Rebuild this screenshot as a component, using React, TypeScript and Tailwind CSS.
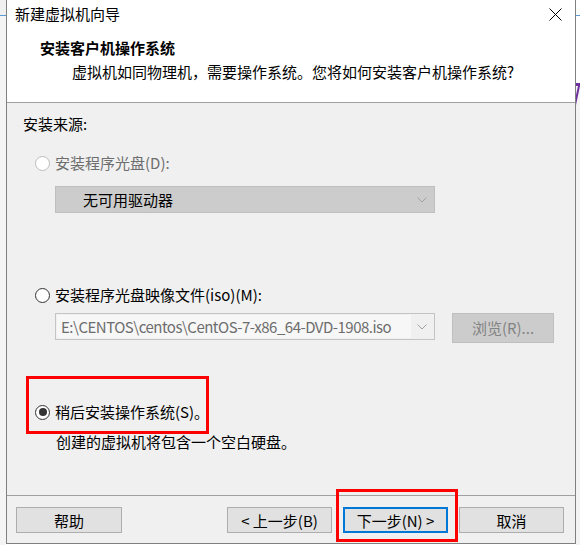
import React from "react";

const font = { fontFamily: '"Noto Sans CJK SC", "Noto Sans", sans-serif' };

function Radio({ checked = false, disabled = false }: { checked?: boolean; disabled?: boolean }) {
  return (
    <span
      className={`w-[15px] h-[15px] rounded-full border bg-white flex items-center justify-center shrink-0 ${
        disabled ? "border-[#bcbcbc]" : "border-[#333333]"
      }`}
    >
      {checked && <span className="w-[8px] h-[8px] rounded-full bg-[#333333]" />}
    </span>
  );
}

function Chevron() {
  return (
    <svg width="10" height="6" viewBox="0 0 10 6" className="shrink-0">
      <path d="M0.5 0.5 L5 5 L9.5 0.5" fill="none" stroke="#a0a0a0" strokeWidth="1" />
    </svg>
  );
}

function Btn({ label, w, primary = false }: { label: string; w: string; primary?: boolean }) {
  return (
    <button
      className={`${w} h-[26px] bg-[#e1e1e1] text-[15px] leading-none text-black flex items-center justify-center ${
        primary ? "border-2 border-[#0078d7]" : "border border-[#adadad]"
      }`}
    >
      {label}
    </button>
  );
}

export default function App() {
  return (
    <div className="w-[580px] h-[545px] flex bg-white relative overflow-hidden" style={font}>
      {/* window behind, left */}
      <div className="w-[6px] h-full flex flex-col">
        <div className="h-[15px] bg-[#f0f0f0]" />
        <div className="h-px bg-[#5b9bd5]" />
        <div className="flex-1 bg-[#f4f4f4]" />
      </div>

      {/* dialog */}
      <div className="w-[570px] h-[544px] border-x border-b border-[#808080] flex flex-col">
        <div className="h-[103px] bg-white border-b border-[#a0a0a0] flex flex-col">
          <div className="h-[28px] flex items-center justify-between pl-[8px] pr-[13px]">
            <span className="text-[15px] text-black">新建虚拟机向导</span>
            <svg width="13" height="13" viewBox="0 0 13 13">
              <path d="M0.5 0.5 L12.5 12.5 M12.5 0.5 L0.5 12.5" stroke="#000" strokeWidth="1" />
            </svg>
          </div>
          <div className="pl-[33px] mt-[10px] text-[15px] font-bold text-black leading-[20px]">安装客户机操作系统</div>
          <div className="pl-[65px] mt-[4px] text-[15px] text-black leading-[20px]">
            虚拟机如同物理机，需要操作系统。您将如何安装客户机操作系统?
          </div>
        </div>

        <div className="flex-1 bg-[#f0f0f0] flex flex-col text-[15px] leading-[20px]">
          <div className="pl-[16px] pt-[11px] text-black">安装来源:</div>

          <div className="pl-[28px] mt-[19px] flex items-center gap-[5px] text-[#6d6d6d]">
            <Radio disabled />
            <span>安装程序光盘(D):</span>
          </div>
          <div className="ml-[48px] mt-[13px] w-[380px] h-[27px] bg-[#cccccc] border border-[#bfbfbf] flex items-center pl-[27px] pr-[7px]">
            <span className="flex-1 text-black">无可用驱动器</span>
            <Chevron />
          </div>

          <div className="pl-[28px] mt-[72px] flex items-center gap-[5px] text-black">
            <Radio />
            <span>安装程序光盘映像文件(iso)(M):</span>
          </div>
          <div className="ml-[48px] mt-[8px] flex items-start gap-[17px]">
            <div className="w-[380px] h-[27px] bg-[#f0f0f0] border border-[#c4c4c4] flex items-center pr-[7px]">
              <div className="w-[354px] h-[23px] ml-[1px] bg-[#f7f7f7] flex items-center pl-[4px] text-[#6d6d6d] whitespace-nowrap tracking-[-0.5px]">
                E:\CENTOS\centos\CentOS-7-x86_64-DVD-1908.iso
              </div>
              <div className="flex-1" />
              <Chevron />
            </div>
            <div className="w-[102px] h-[30px] bg-[#cccccc] border border-[#bfbfbf] flex items-center justify-center text-[#838383]">
              浏览(R)...
            </div>
          </div>

          <div className="pl-[28px] mt-[59px] flex items-center gap-[5px] text-black">
            <Radio checked />
            <span>稍后安装操作系统(S)。</span>
          </div>
          <div className="pl-[49px] mt-[10px] text-black">创建的虚拟机将包含一个空白硬盘。</div>
        </div>

        <div className="h-[48px] bg-[#f0f0f0] border-t border-[#a0a0a0] flex items-start pt-[11px] pl-[9px] pr-[11px]">
          <Btn label="帮助" w="w-[106px]" />
          <div className="flex-1" />
          <div className="flex gap-[11px]">
            <Btn label="< 上一步(B)" w="w-[105px]" />
            <Btn label="下一步(N) >" w="w-[105px]" primary />
            <Btn label="取消" w="w-[105px]" />
          </div>
        </div>
      </div>

      {/* window behind, right */}
      <div className="w-[4px] h-full flex flex-col bg-[#f4f4f4] overflow-hidden">
        <div className="h-[15px] bg-white" />
        <div className="h-px bg-[#5b9bd5]" />
        <div className="h-[67px] bg-white" />
        <svg width="4" height="22" viewBox="0 0 4 22">
          <path d="M0 0 H4 V3 L0 22 V12 L2 3 H0 Z" fill="#7030a0" />
        </svg>
      </div>

      {/* red annotation boxes */}
      <div className="absolute left-[26px] top-[376px] w-[183px] h-[58px] border-[3px] border-[#ff0000] pointer-events-none" />
      <div className="absolute left-[336px] top-[489px] w-[122px] h-[53px] border-[3px] border-[#ff0000] pointer-events-none" />
    </div>
  );
}
